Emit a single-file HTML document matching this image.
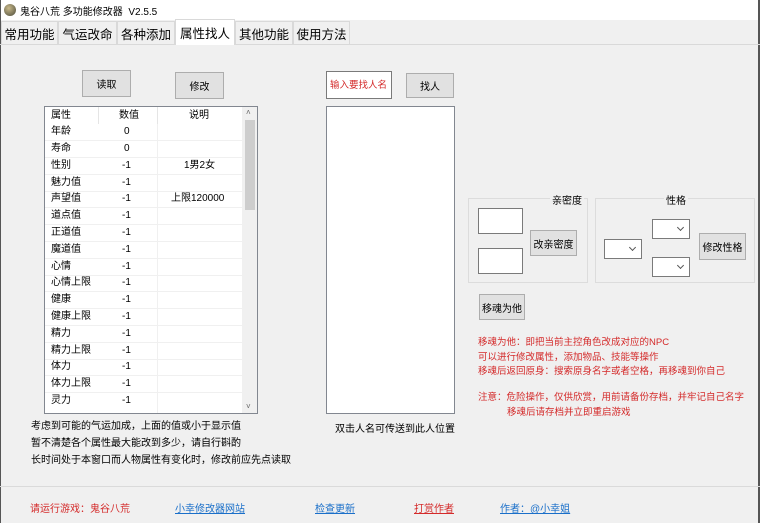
<!DOCTYPE html>
<html><head><meta charset="utf-8"><style>
*{margin:0;padding:0;box-sizing:border-box}
body{width:760px;height:523px;background:#f0f0f0;font-family:"Liberation Sans","Noto Sans CJK SC",sans-serif;font-size:11px;color:#000;position:relative;overflow:hidden}
.a{position:absolute;white-space:nowrap}
.btn{position:absolute;background:#e1e1e1;border:1px solid #adadad;display:flex;align-items:center;justify-content:center;font-size:10px}
.box{position:absolute;background:#fff;border:1px solid #7a7a7a}
.tab{position:absolute;top:21px;height:23px;border:1px solid #d9d9d9;border-bottom:none;background:#f0f0f0;font-size:12.5px;display:flex;align-items:center;justify-content:center}
.row{position:absolute;left:45px;width:197px;height:17px;border-bottom:1px solid #f0f0f0;font-size:10px;line-height:16px}
.row span{position:absolute;top:0;line-height:16px}
.red{color:#d42a2a}
.lnk{color:#1a6fc9;text-decoration:underline}
.grp{position:absolute;border:1px solid #dcdcdc}
.cmb{position:absolute;background:#fff;border:1px solid #7a7a7a}
.cmb:after{content:"";position:absolute;right:6px;top:5px;width:4px;height:4px;border-right:1px solid #555;border-bottom:1px solid #555;transform:rotate(45deg)}
</style></head><body>
<div class="a" style="left:0;top:0;width:760px;height:20px;background:#fff"></div>
<div class="a" style="left:4px;top:4px;width:12px;height:12px;border-radius:50%;background:radial-gradient(circle at 40% 35%,#c9b98a,#4a4a3a)"></div>
<div class="a" style="left:20px;top:3px;font-size:10px">鬼谷八荒 多功能修改器&nbsp; V2.5.5</div>
<div class="a" style="left:0;top:0;width:1px;height:523px;background:#555"></div>
<div class="a" style="left:758px;top:0;width:2px;height:523px;background:#555"></div>
<div class="a" style="left:0;top:44px;width:760px;height:1px;background:#d9d9d9"></div>
<div class="tab" style="left:1px;width:57px">常用功能</div>
<div class="tab" style="left:58px;width:59px">气运改命</div>
<div class="tab" style="left:117px;width:58px">各种添加</div>
<div class="tab" style="left:175px;top:19px;height:26px;width:60px;background:#fff">属性找人</div>
<div class="tab" style="left:235px;width:58px">其他功能</div>
<div class="tab" style="left:293px;width:57px">使用方法</div>
<div class="a" style="left:0;top:486px;width:760px;height:1px;background:#dadada"></div>

<div class="btn" style="left:82px;top:70px;width:49px;height:27px">读取</div>
<div class="btn" style="left:175px;top:72px;width:49px;height:27px">修改</div>

<div class="box" style="left:44px;top:106px;width:214px;height:308px;border-color:#828790"></div>
<div class="a" style="left:45px;top:107px;width:197px;height:17px;font-size:10px;background:#fff;line-height:17px">
<span class="a" style="left:6px;top:0">属性</span><span class="a" style="left:74px;top:0">数值</span><span class="a" style="left:144px;top:0">说明</span>
<div class="a" style="left:53px;top:0;width:1px;height:17px;background:#e5e5e5"></div>
<div class="a" style="left:112px;top:0;width:1px;height:17px;background:#e5e5e5"></div>
</div>
<div class="a" style="left:242px;top:107px;width:15px;height:306px;background:#f0f0f0"></div>
<div class="a" style="left:245px;top:120px;width:10px;height:90px;background:#cdcdcd"></div>
<div class="a" style="left:246px;top:108px;font-size:8px;color:#666">˄</div>
<div class="a" style="left:246px;top:402px;font-size:8px;color:#666">˅</div>
<div class="a" style="left:157px;top:124px;width:1px;height:289px;background:#f0f0f0"></div>

<div class="row" style="top:124px"><span style="left:6px">年龄</span><span style="left:79px">0</span></div>
<div class="row" style="top:141px"><span style="left:6px">寿命</span><span style="left:79px">0</span></div>
<div class="row" style="top:158px"><span style="left:6px">性别</span><span style="left:77px">-1</span><span style="left:139px">1男2女</span></div>
<div class="row" style="top:175px"><span style="left:6px">魅力值</span><span style="left:77px">-1</span></div>
<div class="row" style="top:191px"><span style="left:6px">声望值</span><span style="left:77px">-1</span><span style="left:126px">上限120000</span></div>
<div class="row" style="top:208px"><span style="left:6px">道点值</span><span style="left:77px">-1</span></div>
<div class="row" style="top:225px"><span style="left:6px">正道值</span><span style="left:77px">-1</span></div>
<div class="row" style="top:242px"><span style="left:6px">魔道值</span><span style="left:77px">-1</span></div>
<div class="row" style="top:259px"><span style="left:6px">心情</span><span style="left:77px">-1</span></div>
<div class="row" style="top:275px"><span style="left:6px">心情上限</span><span style="left:77px">-1</span></div>
<div class="row" style="top:292px"><span style="left:6px">健康</span><span style="left:77px">-1</span></div>
<div class="row" style="top:309px"><span style="left:6px">健康上限</span><span style="left:77px">-1</span></div>
<div class="row" style="top:326px"><span style="left:6px">精力</span><span style="left:77px">-1</span></div>
<div class="row" style="top:343px"><span style="left:6px">精力上限</span><span style="left:77px">-1</span></div>
<div class="row" style="top:359px"><span style="left:6px">体力</span><span style="left:77px">-1</span></div>
<div class="row" style="top:376px"><span style="left:6px">体力上限</span><span style="left:77px">-1</span></div>
<div class="row" style="top:393px;border:none"><span style="left:6px">灵力</span><span style="left:77px">-1</span></div>

<div class="a" style="left:31px;top:418px;font-size:10px;line-height:17px">考虑到可能的气运加成，上面的值或小于显示值<br>暂不清楚各个属性最大能改到多少，请自行斟酌<br>长时间处于本窗口而人物属性有变化时，修改前应先点读取</div>

<div class="box red" style="left:326px;top:71px;width:66px;height:28px;font-size:9.5px;padding:5px 0 0 3px">输入要找人名</div>
<div class="btn" style="left:406px;top:73px;width:48px;height:25px">找人</div>
<div class="box" style="left:326px;top:106px;width:129px;height:308px;border-color:#828790"></div>
<div class="a" style="left:335px;top:420px;font-size:10px">双击人名可传送到此人位置</div>

<div class="grp" style="left:468px;top:198px;width:120px;height:85px"></div>
<div class="a" style="left:550px;top:192px;background:#f0f0f0;padding:0 2px;font-size:10px">亲密度</div>
<div class="box" style="left:478px;top:208px;width:45px;height:26px"></div>
<div class="box" style="left:478px;top:248px;width:45px;height:26px"></div>
<div class="btn" style="left:530px;top:230px;width:47px;height:26px">改亲密度</div>

<div class="grp" style="left:595px;top:198px;width:160px;height:85px"></div>
<div class="a" style="left:664px;top:192px;background:#f0f0f0;padding:0 2px;font-size:10px">性格</div>
<div class="cmb" style="left:604px;top:239px;width:38px;height:20px"></div>
<div class="cmb" style="left:652px;top:219px;width:38px;height:20px"></div>
<div class="cmb" style="left:652px;top:257px;width:38px;height:20px"></div>
<div class="btn" style="left:699px;top:233px;width:47px;height:27px">修改性格</div>

<div class="btn" style="left:479px;top:294px;width:46px;height:26px">移魂为他</div>
<div class="a red" style="left:478px;top:336px;font-size:9.5px;line-height:14.5px">移魂为他：即把当前主控角色改成对应的NPC<br>可以进行修改属性，添加物品、技能等操作<br>移魂后返回原身：搜索原身名字或者空格，再移魂到你自己</div>
<div class="a red" style="left:478px;top:390px;font-size:9.5px;line-height:15px">注意：危险操作，仅供欣赏，用前请备份存档，并牢记自己名字<br><span style="padding-left:29px">移魂后请存档并立即重启游戏</span></div>

<div class="a red" style="left:30px;top:500px;font-size:10px">请运行游戏：鬼谷八荒</div>
<div class="a lnk" style="left:175px;top:500px;font-size:10px">小幸修改器网站</div>
<div class="a lnk" style="left:315px;top:500px;font-size:10px">检查更新</div>
<div class="a red" style="left:414px;top:500px;font-size:10px;text-decoration:underline">打赏作者</div>
<div class="a lnk" style="left:500px;top:500px;font-size:10px">作者：@小幸姐</div>
</body></html>
